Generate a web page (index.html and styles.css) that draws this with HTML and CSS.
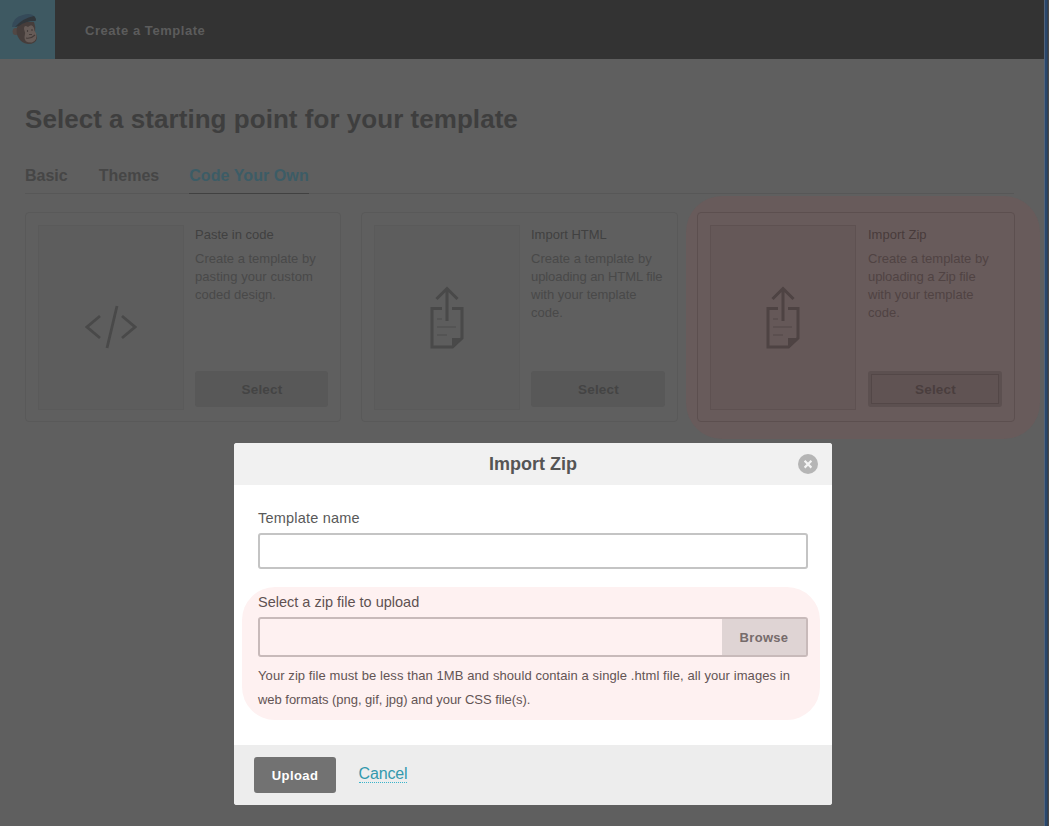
FILE: index.html
```html
<!DOCTYPE html>
<html lang="en">
<head>
<meta charset="utf-8">
<title>Create a Template</title>
<link rel="stylesheet" href="styles.css">
</head>
<body>
<div class="window">
  <div class="app">
    <header class="topbar">
      <div class="logo">
        <svg width="28" height="34" viewBox="0 0 28 34">
          <ellipse cx="3.800" cy="18.500" rx="3.200" ry="3.600" fill="#514744"/>
          <path d="M5 14 Q4 20 6 24 Q9 30 16 31 Q24 31 25 25 Q25 22 23 19 Q24 14 22 9 L10 9Z" fill="#463d3b"/>
          <path d="M12 16 Q12 11 16 14 Q20 10 22 15 Q22 18 24 20 Q26 27 20 29.500 Q12 30 12.500 24 Q14 20 12 16Z" fill="#665b57"/>
          <path d="M0 14 Q1 4 11 2 Q19-1 23 4 L23 6 Q13 6 4 14Z" fill="#354a59"/>
          <path d="M3 14 Q11 5 22 3 Q25 6 23.500 8 Q13 8 7 13Z" fill="#30363b"/>
          <path d="M15.500 17v2M20 16v2M14 25q5 1 9-3M17 21.500h3" fill="none" stroke="#433b39" stroke-width="1.1"/>
        </svg>
      </div>
      <div class="crumb">Create a Template</div>
    </header>
    <main class="content">
      <h1 class="title">Select a starting point for your template</h1>
      <nav class="tabs">
        <a class="tab tab-basic">Basic</a>
        <a class="tab tab-themes">Themes</a>
        <a class="tab tab-active">Code Your Own</a>
      </nav>
      <div class="cards">
        <section class="card">
          <div class="thumb">
            <svg class="code-icon" width="52" height="44" viewBox="0 0 52 44"><path d="M15 11 2 22l13 11M37 11l13 11-13 11M32 1 22 43" fill="none" stroke="#494949" stroke-width="2.8"/></svg>
          </div>
          <div class="info">
            <h2 class="name">Paste in code</h2>
            <p class="desc">Create a template by<br><span class="wide">pasting your custom</span><br>coded design.</p>
            <button class="select">Select</button>
          </div>
        </section>
        <section class="card">
          <div class="thumb">
            <svg class="upload-icon" width="34" height="64" viewBox="0 0 34 64">
              <path d="M12 22.500H2V61h20.500l9.500-9V22.500H22" fill="none" stroke="#494949" stroke-width="3"/>
              <path d="M17 35V2M6.500 13 17 2.500 27.500 13" fill="none" stroke="#494949" stroke-width="3"/>
              <path d="M22 52h11L22 62Z" fill="#494949"/>
              <path d="M7 33h5M7 41h19M7 49h10" stroke="#545454" stroke-width="2"/>
            </svg>
          </div>
          <div class="info">
            <h2 class="name">Import HTML</h2>
            <p class="desc">Create a template by<br><span class="snug">uploading an HTML file</span><br>with your template<br>code.</p>
            <button class="select">Select</button>
          </div>
        </section>
        <section class="card card-marked">
          <div class="thumb">
            <svg class="upload-icon" width="34" height="64" viewBox="0 0 34 64">
              <path d="M12 22.500H2V61h20.500l9.500-9V22.500H22" fill="none" stroke="#4e4343" stroke-width="3"/>
              <path d="M17 35V2M6.500 13 17 2.500 27.500 13" fill="none" stroke="#4e4343" stroke-width="3"/>
              <path d="M22 52h11L22 62Z" fill="#4e4343"/>
              <path d="M7 33h5M7 41h19M7 49h10" stroke="#5b4f4f" stroke-width="2"/>
            </svg>
          </div>
          <div class="info">
            <h2 class="name">Import Zip</h2>
            <p class="desc">Create a template by<br><span class="snug">uploading a Zip file</span><br>with your template<br>code.</p>
            <button class="select">Select</button>
          </div>
        </section>
      </div>
    </main>
  </div>
  <div class="edge"></div>
</div>
<div class="modal">
  <div class="modal-head">
    <h2 class="modal-title">Import Zip</h2>
    <svg class="close" width="20" height="20" viewBox="0 0 20 20"><circle cx="10" cy="10" r="10" fill="#b5b5b5"/><path d="m6.600 6.800 6.800 6.800M13.400 6.800l-6.800 6.800" stroke="#f4f4f4" stroke-width="2.200"/></svg>
  </div>
  <div class="modal-body">
    <label class="label label-name">Template name</label>
    <div class="input"></div>
    <div class="marked">
      <label class="label label-file">Select a zip file to upload</label>
      <div class="file"><div class="browse">Browse</div></div>
      <p class="hint"><span class="hint-a">Your zip file must be less than 1MB and should contain a single .html file, all your images in</span><br><span class="hint-b">web formats (png, gif, jpg) and your CSS file(s).</span></p>
    </div>
  </div>
  <div class="modal-foot">
    <button class="upload">Upload</button>
    <a class="cancel">Cancel</a>
  </div>
</div>
</body>
</html>
```
FILE: styles.css
```css
* { box-sizing: border-box; }
body { margin: 0; font-family: "Liberation Sans", Arial, sans-serif; color: #414141; }
h1, h2, p { margin: 0; font-weight: normal; }
button { font-family: inherit; border: 0; padding: 0; }
.window { display: flex; width: 1049px; height: 826px; overflow: hidden; }
.app { width: 1044px; background: #5f5f5f; }
.edge { width: 5px; background: linear-gradient(90deg, #53637a 1px, #29476c 1px, #29476c 3px, #2f3f55 3px, #2f3f55 4px, #484848 4px); }
.topbar { display: flex; height: 59px; background: #333; }
.logo { width: 55px; background: #3e5962; padding: 13px 0 0 12px; }
.crumb { margin-left: 30px; font-size: 13px; font-weight: bold; line-height: 61px; color: #5c5c5c; letter-spacing: .55px; }
.content { padding: 43px 30px 0 25px; }
.title { font-size: 26px; font-weight: bold; line-height: 34px; color: #3e3e3e; white-space: nowrap; letter-spacing: .04px; }
.tabs { display: flex; gap: 31px; height: 38px; margin-top: 20px; border-bottom: 1px solid #575757; }
.tab { height: 38px; line-height: 39px; font-size: 16px; font-weight: bold; color: #464646; white-space: nowrap; }
.tab-active { margin-left: -1px; letter-spacing: .08px; color: #3c5c66; border-bottom: 1px solid #414141; }
.cards { display: grid; grid-template-columns: 316px 317px 317px; column-gap: 20px; margin: 18px -1px 0 0; isolation: isolate; }
.card { position: relative; display: flex; height: 210px; padding: 12px; border: 1px solid #595959; border-radius: 4px; }
.thumb { flex: none; width: 146px; height: 185px; border: 1px solid #5a5a5a; background: #5d5d5d; }
.code-icon { display: block; margin: 79px 0 0 46px; }
.upload-icon { display: block; margin: 60px 0 0 55px; }
.info { flex: 1; display: flex; flex-direction: column; margin-left: 11px; }
.name { padding-top: 1px; font-size: 13px; line-height: 18px; color: #414141; }
.desc { font-size: 13px; line-height: 18px; margin-top: 6px; color: #494949; white-space: nowrap; }
.snug { letter-spacing: -.08px; }
.wide { letter-spacing: .08px; }
.select { height: 36px; margin-top: auto; margin-bottom: 2px; border-radius: 3px; background: #585858; color: #444; font-size: 13.5px; font-weight: bold; letter-spacing: .2px; line-height: 37px; padding-left: 1px; }
.card-marked { margin-left: -1px; border-color: #5c4f4f; }
.card-marked .info { margin-left: 12px; }
.card-marked::before { content: ""; position: absolute; z-index: -1; left: -12px; top: -17px; width: 354px; height: 243px; border-radius: 36px; background: #685b5b; }
.card-marked .thumb { background: #655858; border-color: #5e5151; }
.card-marked .name { color: #483b3b; }
.card-marked .desc { color: #504343; }
.card-marked .select { background: #605353; color: #4a3e3e; border: 3px solid #5c5050; line-height: 31px; outline: 1px solid #534747; outline-offset: -4px; }
.modal { position: absolute; left: 234px; top: 443px; width: 598px; height: 362px; border-radius: 3px; overflow: hidden; background: #fff; display: flex; flex-direction: column; }
.modal-head { position: relative; height: 42px; background: #f1f1f1; text-align: center; }
.modal-title { font-size: 18px; font-weight: bold; line-height: 42px; color: #555; }
.close { position: absolute; right: 14px; top: 11px; }
.modal-body { flex: 1; padding: 24px 24px 0; }
.label { display: block; font-size: 14.5px; line-height: 18px; color: #595959; white-space: nowrap; }
.label-name { letter-spacing: .2px; }
.input { height: 36px; margin-top: 6px; border: 2px solid #c4c4c4; border-radius: 3px; }
.marked { margin: 18px -12px 0 -16px; height: 133px; border-radius: 33px; background: #fef1f1; padding: 6px 12px 0 16px; }
.label-file { color: #5f5151; }
.file { display: flex; justify-content: flex-end; height: 40px; margin-top: 6px; border: 2px solid #c8baba; border-radius: 3px; }
.browse { width: 84px; background: #dfd4d4; color: #766b6b; font-size: 13px; font-weight: bold; line-height: 37px; text-align: center; letter-spacing: .3px; }
.hint { margin-top: 7px; font-size: 13px; line-height: 24px; color: #635454; white-space: nowrap; }
.hint-a { letter-spacing: .085px; }
.hint-b { letter-spacing: -.03px; }
.modal-foot { display: flex; height: 60px; background: #ededed; padding: 12px 20px; }
.upload { width: 82px; height: 36px; border-radius: 3px; background: #727272; color: #fff; font-size: 13px; font-weight: bold; letter-spacing: .4px; }
.cancel { margin: 7px 0 0 22.5px; height: 19px; line-height: 19px; font-size: 16px; letter-spacing: -.15px; color: #3399ad; border-bottom: 1px dotted #38b4cb; }
```
